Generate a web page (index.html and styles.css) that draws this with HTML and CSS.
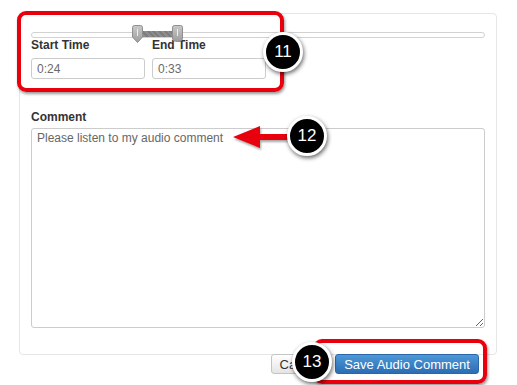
FILE: index.html
```html
<!DOCTYPE html>
<html>
  <head>
    <title>Audio comment</title>
    <link rel="stylesheet" href="styles.css">
  </head>
  <body>
    <div class="page">

      <div class="panel">
        <div class="slider">
          <div class="track"></div>
          <div class="range"></div>
          <svg class="handle handle-start" width="11" height="18" viewBox="0 0 11 18">
            <defs>
              <linearGradient id="hg" x1="0" y1="0" x2="0" y2="1">
                <stop offset="0" stop-color="#c9c9c9"/>
                <stop offset="1" stop-color="#9d9d9d"/>
              </linearGradient>
            </defs>
            <path d="M2.5 0.5 H8.5 Q10.5 0.5 10.5 2.5 V12 L5.5 17.5 L0.5 12 V2.5 Q0.5 0.5 2.5 0.5 Z" fill="url(#hg)" stroke="#8f8f8f"/>
            <rect x="5" y="4" width="1" height="7" fill="#eeeeee"/>
          </svg>
          <svg class="handle handle-end" width="11" height="18" viewBox="0 0 11 18">
            <path d="M2.5 0.5 H8.5 Q10.5 0.5 10.5 2.5 V13 Q10.5 16.5 5.5 16.5 Q0.5 16.5 0.5 13 V2.5 Q0.5 0.5 2.5 0.5 Z" fill="url(#hg)" stroke="#8f8f8f"/>
            <rect x="5" y="4" width="1" height="7" fill="#eeeeee"/>
          </svg>
        </div>

        <div class="times">
          <div class="field">
            <label>Start Time</label>
            <input type="text" value="0:24">
          </div>
          <div class="field">
            <label>End Time</label>
            <input type="text" value="0:33">
          </div>
        </div>

        <label class="comment-label">Comment</label>
        <textarea class="comment">Please listen to my audio comment</textarea>
      </div>

      <div class="actions">
        <button class="btn">Cancel</button>
        <button class="btn btn-primary">Save Audio Comment</button>
      </div>

      <!-- callouts -->
      <div class="callout-box box-times"></div>
      <div class="callout-box box-save"></div>

      <svg class="arrow" width="64" height="30" viewBox="0 0 64 30">
        <path d="M3 13 L30 2 V10 H64 V16 H30 V24 Z" fill="#e8000d"/>
      </svg>

      <div class="step step-11">11</div>
      <div class="step step-12">12</div>
      <div class="step step-13">13</div>
    </div>
  </body>
</html>
```

FILE: styles.css
```css
body {
  margin: 0;
  background-color: white;
  font-family: "Liberation Sans", Arial, sans-serif;
  color: #333;
}

.page {
  position: relative;
  width: 517px;
  height: 385px;
  padding: 13px 0 0 19px;
  box-sizing: border-box;
  overflow: hidden;
}

.panel {
  width: 478px;
  box-sizing: border-box;
  border: 1px solid #e6e6e6;
  border-radius: 4px;
  padding: 11px 11px 26px 11px;
}

.slider {
  position: relative;
  height: 13px;
}

.track {
  position: relative;
  top: 7px;
  height: 6px;
  box-sizing: border-box;
  border: 1px solid #d2d2d2;
  border-radius: 4px;
  background-color: #fff;
}

.range {
  position: absolute;
  left: 110px;
  top: 6px;
  width: 33px;
  height: 6px;
  background: repeating-linear-gradient(45deg, #7d7d7d 0 2px, #8e8e8e 2px 4px);
}

.handle {
  position: absolute;
  top: 0;
}

.handle-start {
  left: 101px;
}

.handle-end {
  left: 141px;
}

.times {
  display: flex;
  gap: 7px;
}

.field {
  width: 114px;
}

.field label,
.comment-label {
  display: block;
  font-size: 12px;
  font-weight: bold;
  line-height: 15px;
  color: #333;
}

.field input {
  display: block;
  margin-top: 5px;
  width: 114px;
  height: 21px;
  box-sizing: border-box;
  border: 1px solid #ccc;
  border-radius: 3px;
  padding: 0 5px;
  font-family: "Liberation Sans", Arial, sans-serif;
  font-size: 12px;
  color: #6a6a6a;
}

.comment-label {
  margin-top: 31px;
  margin-bottom: 3px;
}

.comment {
  display: block;
  width: 454px;
  height: 200px;
  box-sizing: border-box;
  margin: 0;
  border: 1px solid #ccc;
  border-radius: 3px;
  padding: 2px 5px;
  font-family: "Liberation Sans", Arial, sans-serif;
  font-size: 12px;
  line-height: 14px;
  color: #666;
}

.actions {
  display: flex;
  justify-content: flex-end;
  gap: 6px;
  width: 478px;
  box-sizing: border-box;
  padding-right: 18px;
  margin-top: -1px;
}

.btn {
  height: 20px;
  padding: 0 8px;
  border: 1px solid #c4c4c4;
  border-radius: 3px;
  background: linear-gradient(#ffffff, #e4e4e4);
  font-family: "Liberation Sans", Arial, sans-serif;
  font-size: 13px;
  color: #333;
}

.btn-primary {
  width: 144px;
  border-color: #2b66a8;
  background: linear-gradient(#4c98d8, #2c6db3);
  color: white;
}

.callout-box {
  position: absolute;
  box-sizing: border-box;
  border: 4px solid #e8000d;
  border-radius: 9px;
  box-shadow: 1px 2px 3px rgba(0, 0, 0, 0.4);
}

.box-times {
  left: 17px;
  top: 11px;
  width: 267px;
  height: 81px;
}

.box-save {
  left: 313px;
  top: 339px;
  width: 174px;
  height: 45px;
}

.arrow {
  position: absolute;
  left: 230px;
  top: 124px;
  filter: drop-shadow(1px 2px 1px rgba(0, 0, 0, 0.35));
}

.step {
  position: absolute;
  width: 40px;
  height: 40px;
  box-sizing: border-box;
  border: 3px solid white;
  border-radius: 50%;
  background-color: black;
  box-shadow: 1px 2px 4px rgba(0, 0, 0, 0.6);
  color: white;
  font-size: 17px;
  line-height: 34px;
  text-align: center;
}

.step-11 {
  left: 263px;
  top: 32px;
}

.step-12 {
  left: 287px;
  top: 116px;
}

.step-13 {
  left: 292px;
  top: 342px;
}
```
